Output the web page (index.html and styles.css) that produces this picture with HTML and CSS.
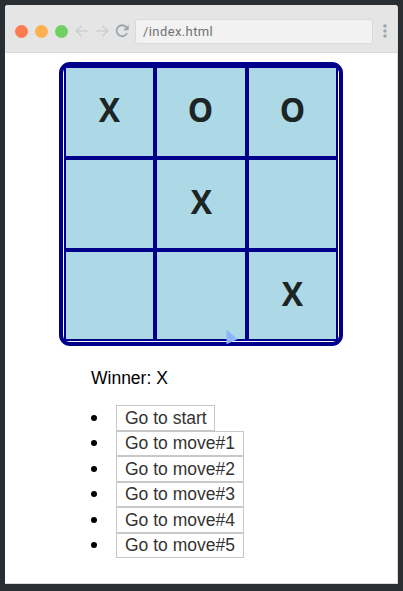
FILE: index.html
```html
<!DOCTYPE html>
<html lang="en">
<head>
<meta charset="utf-8">
<title>Tic Tac Toe</title>
<link rel="stylesheet" href="styles.css">
</head>
<body>
<div class="window">
  <header class="toolbar">
    <span class="dot red"></span><span class="dot amber"></span><span class="dot green"></span>
    <svg class="arrow" viewBox="0 0 14 14"><path d="M13.2 7H1.2M6.6 1.6L1.2 7l5.4 5.4"/></svg>
    <svg class="arrow forward" viewBox="0 0 14 14"><path d="M.8 7h12M7.4 1.6L12.8 7l-5.4 5.4"/></svg>
    <svg class="reload" viewBox="0 0 14 14"><path class="ring" d="M11.3 3.2A5.5 5.5 0 1 0 12.1 9"/><path class="head" d="M13.7.7v5.6H8.1z"/></svg>
    <div class="address">/index.html</div>
    <svg class="menu" viewBox="0 0 4 14"><circle cx="2" cy="2" r="1.8"/><circle cx="2" cy="7" r="1.8"/><circle cx="2" cy="12" r="1.8"/></svg>
  </header>
  <main class="page">
    <div class="board">
      <div class="square"><span class="mark">X</span></div>
      <div class="square"><span class="mark">O</span></div>
      <div class="square"><span class="mark">O</span></div>
      <div class="square"></div>
      <div class="square"><span class="mark">X</span></div>
      <div class="square"></div>
      <div class="square"></div>
      <div class="square"></div>
      <div class="square"><span class="mark">X</span></div>
      <svg class="pointer" viewBox="0 0 12 16"><path d="M.5.5v14.8L11.5 10.3z"/></svg>
    </div>
    <div class="info">
      <p class="status">Winner: X</p>
      <ul class="moves">
        <li><button>Go to start</button></li>
        <li><button>Go to move#1</button></li>
        <li><button>Go to move#2</button></li>
        <li><button>Go to move#3</button></li>
        <li><button>Go to move#4</button></li>
        <li><button>Go to move#5</button></li>
      </ul>
    </div>
  </main>
</div>
</body>
</html>
```
FILE: styles.css
```css
* { box-sizing: border-box; }
body {
  margin: 0;
  height: 591px;
  padding: 5px 5px 7px 5px;
  background: #282e32;
  overflow: hidden;
}
.window {
  height: 579px;
  background: #fff;
  border-radius: 3px 3px 0 0;
  overflow: hidden;
  border: solid #d8dadb;
  border-width: 0 1px 1px 0;
}
.toolbar {
  display: flex;
  align-items: center;
  height: 48px;
  padding: 5px 0 0 10px;
  background: #e5e5e5;
  border-bottom: 1px solid #dadada;
}
.dot {
  width: 13px;
  height: 13px;
  margin-right: 7px;
  border-radius: 50%;
}
.red { background: #fc7b50; }
.amber { background: #fcb04f; }
.green { background: #70d163; }
.arrow {
  width: 14px;
  height: 14px;
  fill: none;
  stroke: #ccd0d4;
  stroke-width: 1.6;
}
.forward { margin-left: 6px; }
.reload {
  width: 14px;
  height: 14px;
  margin-left: 6px;
}
.ring { fill: none; stroke: #9da6ad; stroke-width: 1.8; }
.head { fill: #9da6ad; }
.address {
  width: 238px;
  height: 25px;
  margin-left: 6px;
  padding-left: 7px;
  border: 1px solid #dadada;
  border-radius: 3px;
  background: #f2f2f2;
  color: #707070;
  font: 13px/23px Roboto, sans-serif;
  letter-spacing: .4px;
}
.menu {
  width: 4px;
  height: 14px;
  margin-left: 10px;
  fill: #9da6ad;
}
.page {
  padding: 9px 0 0 54px;
  font-family: "Liberation Sans", Arial, sans-serif;
}
.board {
  position: relative;
  display: grid;
  grid-template: 92px 92px 91px / 91px 92px 91px;
  width: 284px;
  height: 284px;
  padding: 0 1px 1px;
  border: 4px solid #00008b;
  border-radius: 11px;
}
.square {
  border: 2px solid #00008b;
  background: #add8e6;
  color: #1c2424;
  font: bold 34px/82px "Open Sans", sans-serif;
  text-align: center;
}
.mark {
  display: inline-block;
  transform: scaleX(.94);
}
.pointer {
  position: absolute;
  left: 163px;
  top: 263px;
  width: 12px;
  height: 16px;
  fill: #8bb5ff;
}
.info { padding-left: 32px; }
.status {
  margin: 22px 0 16px;
  color: #000;
  font-size: 17.5px;
  line-height: 21px;
}
.moves {
  margin: 0;
  padding: 0;
  list-style: none;
}
.moves li {
  display: flex;
  align-items: center;
  height: 25.5px;
}
.moves li::before {
  content: "";
  width: 6px;
  height: 6px;
  margin-right: 19px;
  border-radius: 50%;
  background: #000;
}
.moves button {
  height: 25.5px;
  padding: 0 7.6px 0 8px;
  border: 1px solid #c8c8c8;
  background: #fff;
  color: #333;
  font: 17.5px/22px "Liberation Sans", Arial, sans-serif;
}
```
